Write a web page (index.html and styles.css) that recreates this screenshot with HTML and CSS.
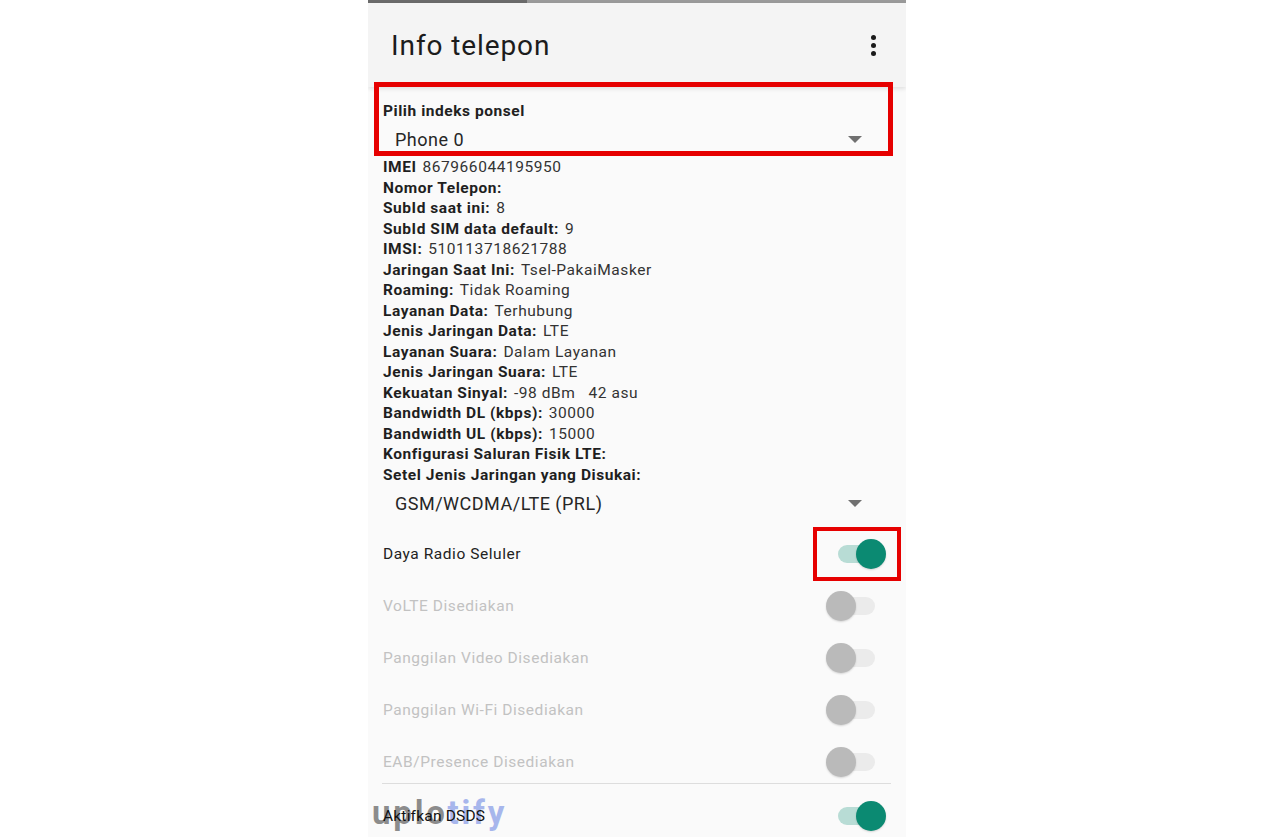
FILE: index.html
```html
<!DOCTYPE html>
<html>
<head>
  <title>Info telepon</title>
  <link rel="stylesheet" href="styles.css">
</head>
<body>
  <div class="phone">
    <div class="statusline"></div>
    <div class="appbar">
      <h1>Info telepon</h1>
      <div class="menu"><i></i><i></i><i></i></div>
    </div>

    <div class="content">
      <div class="picker">
        <div class="picker-label">Pilih indeks ponsel</div>
        <div class="select">
          <span>Phone 0</span>
          <span class="caret"></span>
        </div>
        <div class="mark"></div>
      </div>

      <ul class="info">
        <li><b>IMEI</b><span>867966044195950</span></li>
        <li><b>Nomor Telepon:</b></li>
        <li><b>SubId saat ini:</b><span>8</span></li>
        <li><b>SubId SIM data default:</b><span>9</span></li>
        <li><b>IMSI:</b><span>510113718621788</span></li>
        <li><b>Jaringan Saat Ini:</b><span>Tsel-PakaiMasker</span></li>
        <li><b>Roaming:</b><span>Tidak Roaming</span></li>
        <li><b>Layanan Data:</b><span>Terhubung</span></li>
        <li><b>Jenis Jaringan Data:</b><span>LTE</span></li>
        <li><b>Layanan Suara:</b><span>Dalam Layanan</span></li>
        <li><b>Jenis Jaringan Suara:</b><span>LTE</span></li>
        <li><b>Kekuatan Sinyal:</b><span>-98 dBm   42 asu</span></li>
        <li><b>Bandwidth DL (kbps):</b><span>30000</span></li>
        <li><b>Bandwidth UL (kbps):</b><span>15000</span></li>
        <li><b>Konfigurasi Saluran Fisik LTE:</b></li>
        <li><b>Setel Jenis Jaringan yang Disukai:</b></li>
      </ul>

      <div class="select network">
        <span>GSM/WCDMA/LTE (PRL)</span>
        <span class="caret"></span>
      </div>

      <div class="row first">
        <span>Daya Radio Seluler</span>
        <div class="switch on"><div class="mark"></div></div>
      </div>
      <div class="row disabled">
        <span>VoLTE Disediakan</span>
        <div class="switch"></div>
      </div>
      <div class="row disabled">
        <span>Panggilan Video Disediakan</span>
        <div class="switch"></div>
      </div>
      <div class="row disabled">
        <span>Panggilan Wi-Fi Disediakan</span>
        <div class="switch"></div>
      </div>
      <div class="row disabled">
        <span>EAB/Presence Disediakan</span>
        <div class="switch"></div>
      </div>
      <div class="divider"></div>
      <div class="row">
        <div class="watermark">uplo<em>tify</em></div>
        <span class="label">Aktifkan DSDS</span>
        <div class="switch on"></div>
      </div>
    </div>
  </div>
</body>
</html>
```

FILE: styles.css
```css
body {
  margin: 0;
  background: #ffffff;
  font-family: Roboto, "Noto Sans", Arial, sans-serif;
  color: #212121;
  overflow: hidden;
}
.phone {
  width: 538px;
  height: 837px;
  margin-left: 368px;
  background: #fafafa;
  overflow: hidden;
}
.statusline {
  height: 3px;
  background: linear-gradient(to right, #6b6b6b 0, #6b6b6b 159px, #9a9a9a 159px);
}
.appbar {
  height: 84px;
  display: flex;
  align-items: center;
  justify-content: space-between;
  padding: 0 30px 0 23px;
  background: #f4f4f4;
  box-shadow: 0 2px 4px rgba(0, 0, 0, 0.1);
  position: relative;
}
.appbar h1 {
  margin: 0;
  font-size: 28px;
  font-weight: 400;
  letter-spacing: 0.9px;
  color: #1c1c1c;
}
.menu {
  display: flex;
  flex-direction: column;
  gap: 3px;
}
.menu i {
  display: block;
  width: 5px;
  height: 5px;
  border-radius: 50%;
  background: #1a1a1a;
}

.content {
  padding: 0 15px;
  font-size: 15.5px;
  letter-spacing: 0.55px;
}
.picker {
  position: relative;
  padding-top: 14px;
  margin-bottom: 4px;
}
.picker-label {
  font-weight: 700;
  line-height: 20px;
}
.select {
  display: flex;
  justify-content: space-between;
  align-items: center;
  height: 28px;
  margin-top: 4px;
  padding: 0 29px 0 12px;
  font-size: 18px;
  letter-spacing: 0.5px;
  color: #262626;
}
.caret {
  width: 0;
  height: 0;
  border-left: 7px solid transparent;
  border-right: 7px solid transparent;
  border-top: 7px solid #707070;
}
.mark {
  position: absolute;
  border: 5px solid #e60000;
  z-index: 2;
}
.picker .mark {
  left: -9px;
  right: -2px;
  top: -5px;
  bottom: -3px;
}

.info {
  list-style: none;
  margin: 0;
  padding: 0;
  line-height: 20.5px;
}
.info b {
  font-weight: 700;
  color: #1f1f1f;
}
.info span {
  margin-left: 6px;
  color: #333333;
  white-space: pre;
}
.select.network {
  margin-top: 4px;
}

.row {
  position: relative;
  display: flex;
  justify-content: space-between;
  align-items: center;
  height: 52px;
  padding-right: 5px;
  color: #222222;
}
.row.first {
  margin-top: 11px;
}
.row.disabled {
  color: #c2c2c2;
}
.divider {
  height: 1px;
  margin: -5px 0 6px -1px;
  background: #dddddd;
}

.switch {
  position: relative;
  width: 60px;
  height: 30px;
}
.switch::before {
  content: "";
  position: absolute;
  left: 12px;
  top: 6px;
  width: 37px;
  height: 18px;
  border-radius: 9px;
  background: #ebebeb;
}
.switch::after {
  content: "";
  position: absolute;
  left: 0;
  top: 0;
  width: 30px;
  height: 30px;
  border-radius: 50%;
  background: #bababa;
  box-shadow: 0 1px 2px rgba(0, 0, 0, 0.15);
}
.switch.on::before {
  background: #b8dcd5;
}
.switch.on::after {
  left: auto;
  right: 0;
  background: #0b8a72;
}
.switch .mark {
  left: -13px;
  right: -15px;
  top: -12px;
  bottom: -12px;
  border-width: 4px;
}

.watermark {
  position: absolute;
  left: -11px;
  top: 3px;
  font-size: 33px;
  font-weight: 700;
  letter-spacing: 2.8px;
  color: rgba(120, 120, 120, 0.85);
}
.watermark em {
  font-style: normal;
  color: #a7b6ec;
}
.row .label {
  position: relative;
  z-index: 1;
  letter-spacing: 0.2px;
  color: #111111;
}
```
